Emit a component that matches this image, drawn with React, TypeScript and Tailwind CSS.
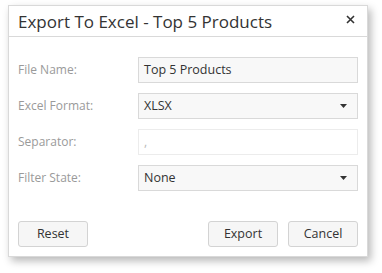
import { useState } from 'react';

const font = { fontFamily: '"Open Sans", "Noto Sans", sans-serif' };

const Caret = () => (
    <svg width="7" height="4" viewBox="0 0 7 4" className="shrink-0">
        <path d="M0 0 H7 L3.5 4 Z" fill="#333" />
    </svg>
);

interface FieldRowProps {
    label: string;
    value: string;
    select?: boolean;
    disabled?: boolean;
}

const FieldRow = ({ label, value, select, disabled }: FieldRowProps) => (
    <div className="flex items-center h-[26px]">
        <div className="w-[120px] text-[12px] text-[#9a9a9a]">{label}</div>
        <div
            className={`flex-1 h-[26px] flex items-center justify-between pl-[5px] pr-[10px] border ${
                disabled ? 'bg-white border-[#ececec] text-[#bbb]' : 'bg-[#f8f8f8] border-[#d9d9d9] text-[#333]'
            } text-[12.5px]`}
        >
            <span>{value}</span>
            {select && <Caret />}
        </div>
    </div>
);

const Button = ({ children }: { children: string }) => (
    <button className="w-[70px] h-[26px] border border-[#d3d3d3] rounded-[3px] bg-[#f6f6f6] text-[12.5px] text-[#333]">
        {children}
    </button>
);

export default function App() {
    const [open] = useState(true);

    return (
        <div className="w-[382px] h-[273px] bg-white pt-[5px] pl-[8px]" style={font}>
            {open && (
                <div className="w-[360px] h-[252px] bg-white border border-[#d9d9d9] shadow-[3px_4px_8px_rgba(0,0,0,0.28)] flex flex-col">
                    {/* Header */}
                    <div className="h-[31px] border-b border-[#d9d9d9] flex items-center justify-between pl-[9px] pr-[12px]">
                        <span className="text-[17px] text-[#333] leading-none">Export To Excel - Top 5 Products</span>
                        <svg width="9" height="9" viewBox="0 0 9 9" className="mb-[4px]">
                            <path d="M1 1 L8 8 M8 1 L1 8" stroke="#333" strokeWidth="1.6" />
                        </svg>
                    </div>

                    {/* Body */}
                    <div className="flex flex-col gap-[10px] px-[9px] pt-[20px]">
                        <FieldRow label="File Name:" value="Top 5 Products" />
                        <FieldRow label="Excel Format:" value="XLSX" select />
                        <FieldRow label="Separator:" value="," disabled />
                        <FieldRow label="Filter State:" value="None" select />
                    </div>

                    {/* Footer */}
                    <div className="flex justify-between px-[9px] mt-[30px]">
                        <Button>Reset</Button>
                        <div className="flex gap-[10px]">
                            <Button>Export</Button>
                            <Button>Cancel</Button>
                        </div>
                    </div>
                </div>
            )}
        </div>
    );
}
